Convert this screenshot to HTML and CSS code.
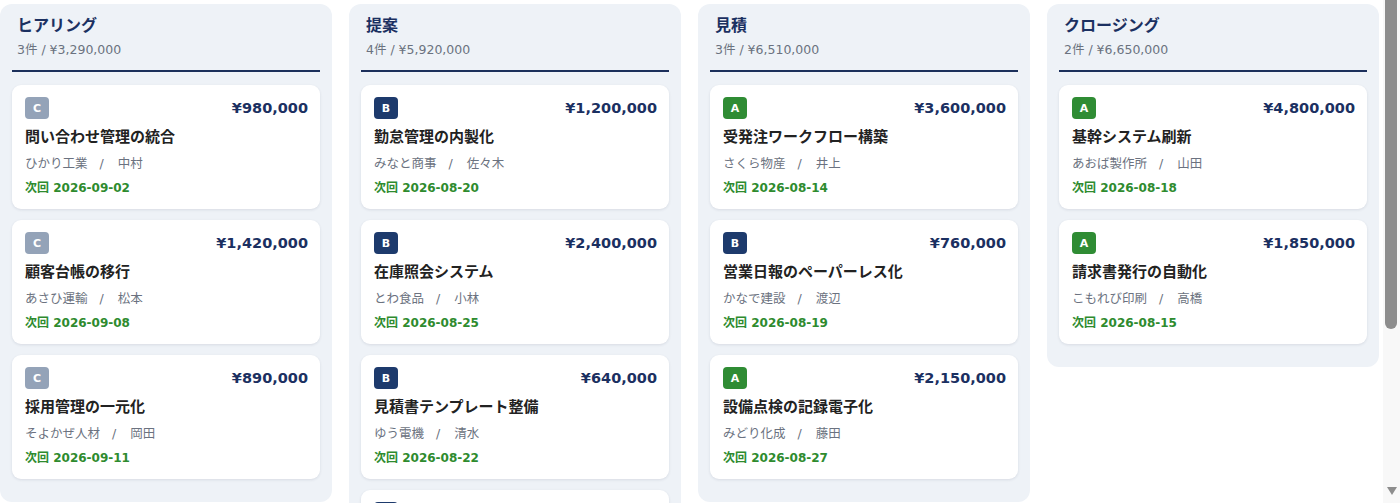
FILE: index.html
```html
<!DOCTYPE html>
<html lang="ja">
<head>
<meta charset="utf-8">
<title>商談パイプライン</title>
<link rel="stylesheet" href="styles.css">
</head>
<body>
<main class="board">
  <section class="column">
    <header class="col-head">
      <h2 class="col-title">ヒアリング</h2>
      <p class="col-sub">3件 / ¥3,290,000</p>
    </header>
    <div class="cards">
      <article class="card">
        <div class="card-top"><span class="rank rank-c">C</span><span class="price">¥980,000</span></div>
        <h3 class="deal">問い合わせ管理の統合</h3>
        <p class="meta">ひかり工業<span class="sep">/</span>中村</p>
        <p class="next">次回 2026-09-02</p>
      </article>
      <article class="card">
        <div class="card-top"><span class="rank rank-c">C</span><span class="price">¥1,420,000</span></div>
        <h3 class="deal">顧客台帳の移行</h3>
        <p class="meta">あさひ運輸<span class="sep">/</span>松本</p>
        <p class="next">次回 2026-09-08</p>
      </article>
      <article class="card">
        <div class="card-top"><span class="rank rank-c">C</span><span class="price">¥890,000</span></div>
        <h3 class="deal">採用管理の一元化</h3>
        <p class="meta">そよかぜ人材<span class="sep">/</span>岡田</p>
        <p class="next">次回 2026-09-11</p>
      </article>
    </div>
  </section>

  <section class="column">
    <header class="col-head">
      <h2 class="col-title">提案</h2>
      <p class="col-sub">4件 / ¥5,920,000</p>
    </header>
    <div class="cards">
      <article class="card">
        <div class="card-top"><span class="rank rank-b">B</span><span class="price">¥1,200,000</span></div>
        <h3 class="deal">勤怠管理の内製化</h3>
        <p class="meta">みなと商事<span class="sep">/</span>佐々木</p>
        <p class="next">次回 2026-08-20</p>
      </article>
      <article class="card">
        <div class="card-top"><span class="rank rank-b">B</span><span class="price">¥2,400,000</span></div>
        <h3 class="deal">在庫照会システム</h3>
        <p class="meta">とわ食品<span class="sep">/</span>小林</p>
        <p class="next">次回 2026-08-25</p>
      </article>
      <article class="card">
        <div class="card-top"><span class="rank rank-b">B</span><span class="price">¥640,000</span></div>
        <h3 class="deal">見積書テンプレート整備</h3>
        <p class="meta">ゆう電機<span class="sep">/</span>清水</p>
        <p class="next">次回 2026-08-22</p>
      </article>
      <article class="card">
        <div class="card-top"><span class="rank rank-b">B</span><span class="price">¥1,680,000</span></div>
        <h3 class="deal">経費精算の電子化</h3>
        <p class="meta">ふたば商会<span class="sep">/</span>小川</p>
        <p class="next">次回 2026-08-28</p>
      </article>
    </div>
  </section>

  <section class="column">
    <header class="col-head">
      <h2 class="col-title">見積</h2>
      <p class="col-sub">3件 / ¥6,510,000</p>
    </header>
    <div class="cards">
      <article class="card">
        <div class="card-top"><span class="rank rank-a">A</span><span class="price">¥3,600,000</span></div>
        <h3 class="deal">受発注ワークフロー構築</h3>
        <p class="meta">さくら物産<span class="sep">/</span>井上</p>
        <p class="next">次回 2026-08-14</p>
      </article>
      <article class="card">
        <div class="card-top"><span class="rank rank-b">B</span><span class="price">¥760,000</span></div>
        <h3 class="deal">営業日報のペーパーレス化</h3>
        <p class="meta">かなで建設<span class="sep">/</span>渡辺</p>
        <p class="next">次回 2026-08-19</p>
      </article>
      <article class="card">
        <div class="card-top"><span class="rank rank-a">A</span><span class="price">¥2,150,000</span></div>
        <h3 class="deal">設備点検の記録電子化</h3>
        <p class="meta">みどり化成<span class="sep">/</span>藤田</p>
        <p class="next">次回 2026-08-27</p>
      </article>
    </div>
  </section>

  <section class="column">
    <header class="col-head">
      <h2 class="col-title">クロージング</h2>
      <p class="col-sub">2件 / ¥6,650,000</p>
    </header>
    <div class="cards">
      <article class="card">
        <div class="card-top"><span class="rank rank-a">A</span><span class="price">¥4,800,000</span></div>
        <h3 class="deal">基幹システム刷新</h3>
        <p class="meta">あおば製作所<span class="sep">/</span>山田</p>
        <p class="next">次回 2026-08-18</p>
      </article>
      <article class="card">
        <div class="card-top"><span class="rank rank-a">A</span><span class="price">¥1,850,000</span></div>
        <h3 class="deal">請求書発行の自動化</h3>
        <p class="meta">こもれび印刷<span class="sep">/</span>高橋</p>
        <p class="next">次回 2026-08-15</p>
      </article>
    </div>
  </section>
</main>
<div class="scrollbar" aria-hidden="true">
  <div class="scroll-thumb"></div>
  <div class="scroll-arrow"></div>
</div>
</body>
</html>
```

FILE: styles.css
```css
html, body {
  margin: 0;
  padding: 0;
  background: #ffffff;
}

body {
  font-family: "DejaVu Sans", "Noto Sans CJK JP", sans-serif;
  color: #1f2937;
}

.board {
  display: grid;
  grid-template-columns: repeat(4, 1fr);
  gap: 17px;
  align-items: start;
  padding: 4px 21px 104px 0;
}

.column {
  background: #eef2f7;
  border-radius: 12px;
  padding: 12px 12px 23px 12px;
}

.col-head {
  padding: 0 0 11px 5px;
  border-bottom: 2px solid #1b2f5b;
  margin-bottom: 13px;
}

.col-title {
  margin: 0;
  font-size: 16px;
  line-height: 20px;
  font-weight: 700;
  color: #1b3061;
}

.col-sub {
  margin: 5px 0 0 0;
  font-size: 12.5px;
  line-height: 18px;
  color: #6b7280;
}

.cards {
  display: flex;
  flex-direction: column;
  gap: 11px;
}

.card {
  background: #ffffff;
  border-radius: 9px;
  box-shadow: 0 1px 3px rgba(15, 30, 60, 0.10);
  padding: 12px 12px 12px 13px;
}

.card-top {
  display: flex;
  justify-content: space-between;
  align-items: center;
  height: 22px;
}

.rank {
  display: inline-flex;
  align-items: center;
  justify-content: center;
  width: 24px;
  height: 22px;
  border-radius: 4px;
  color: #ffffff;
  font-size: 11px;
  font-weight: 700;
}

.rank-a { background: #2f8c34; }
.rank-b { background: #1d3a6c; }
.rank-c { background: #94a3b8; }

.price {
  font-size: 14.5px;
  font-weight: 700;
  color: #1b3061;
}

.deal {
  margin: 8px 0 0 0;
  font-size: 15px;
  line-height: 20px;
  font-weight: 700;
  color: #222;
}

.meta {
  margin: 8px 0 0 0;
  font-size: 12.5px;
  line-height: 18px;
  color: #6b7280;
}

.sep {
  margin: 0 14px 0 12px;
}

.next {
  margin: 6px 0 0 0;
  font-size: 12px;
  line-height: 18px;
  font-weight: 700;
  color: #2e8b2e;
}

.scrollbar {
  position: fixed;
  top: 0;
  right: 0;
  bottom: 0;
  width: 17px;
  background: #f8f8f8;
}

.scroll-thumb {
  position: absolute;
  top: 0;
  left: 2px;
  width: 12px;
  height: 329px;
  background: #8d8d8d;
  border-radius: 0 0 6px 6px;
}

.scroll-arrow {
  position: absolute;
  left: 4px;
  bottom: 8px;
  width: 0;
  height: 0;
  border-left: 5px solid transparent;
  border-right: 5px solid transparent;
  border-top: 8px solid #8d8d8d;
}
```
